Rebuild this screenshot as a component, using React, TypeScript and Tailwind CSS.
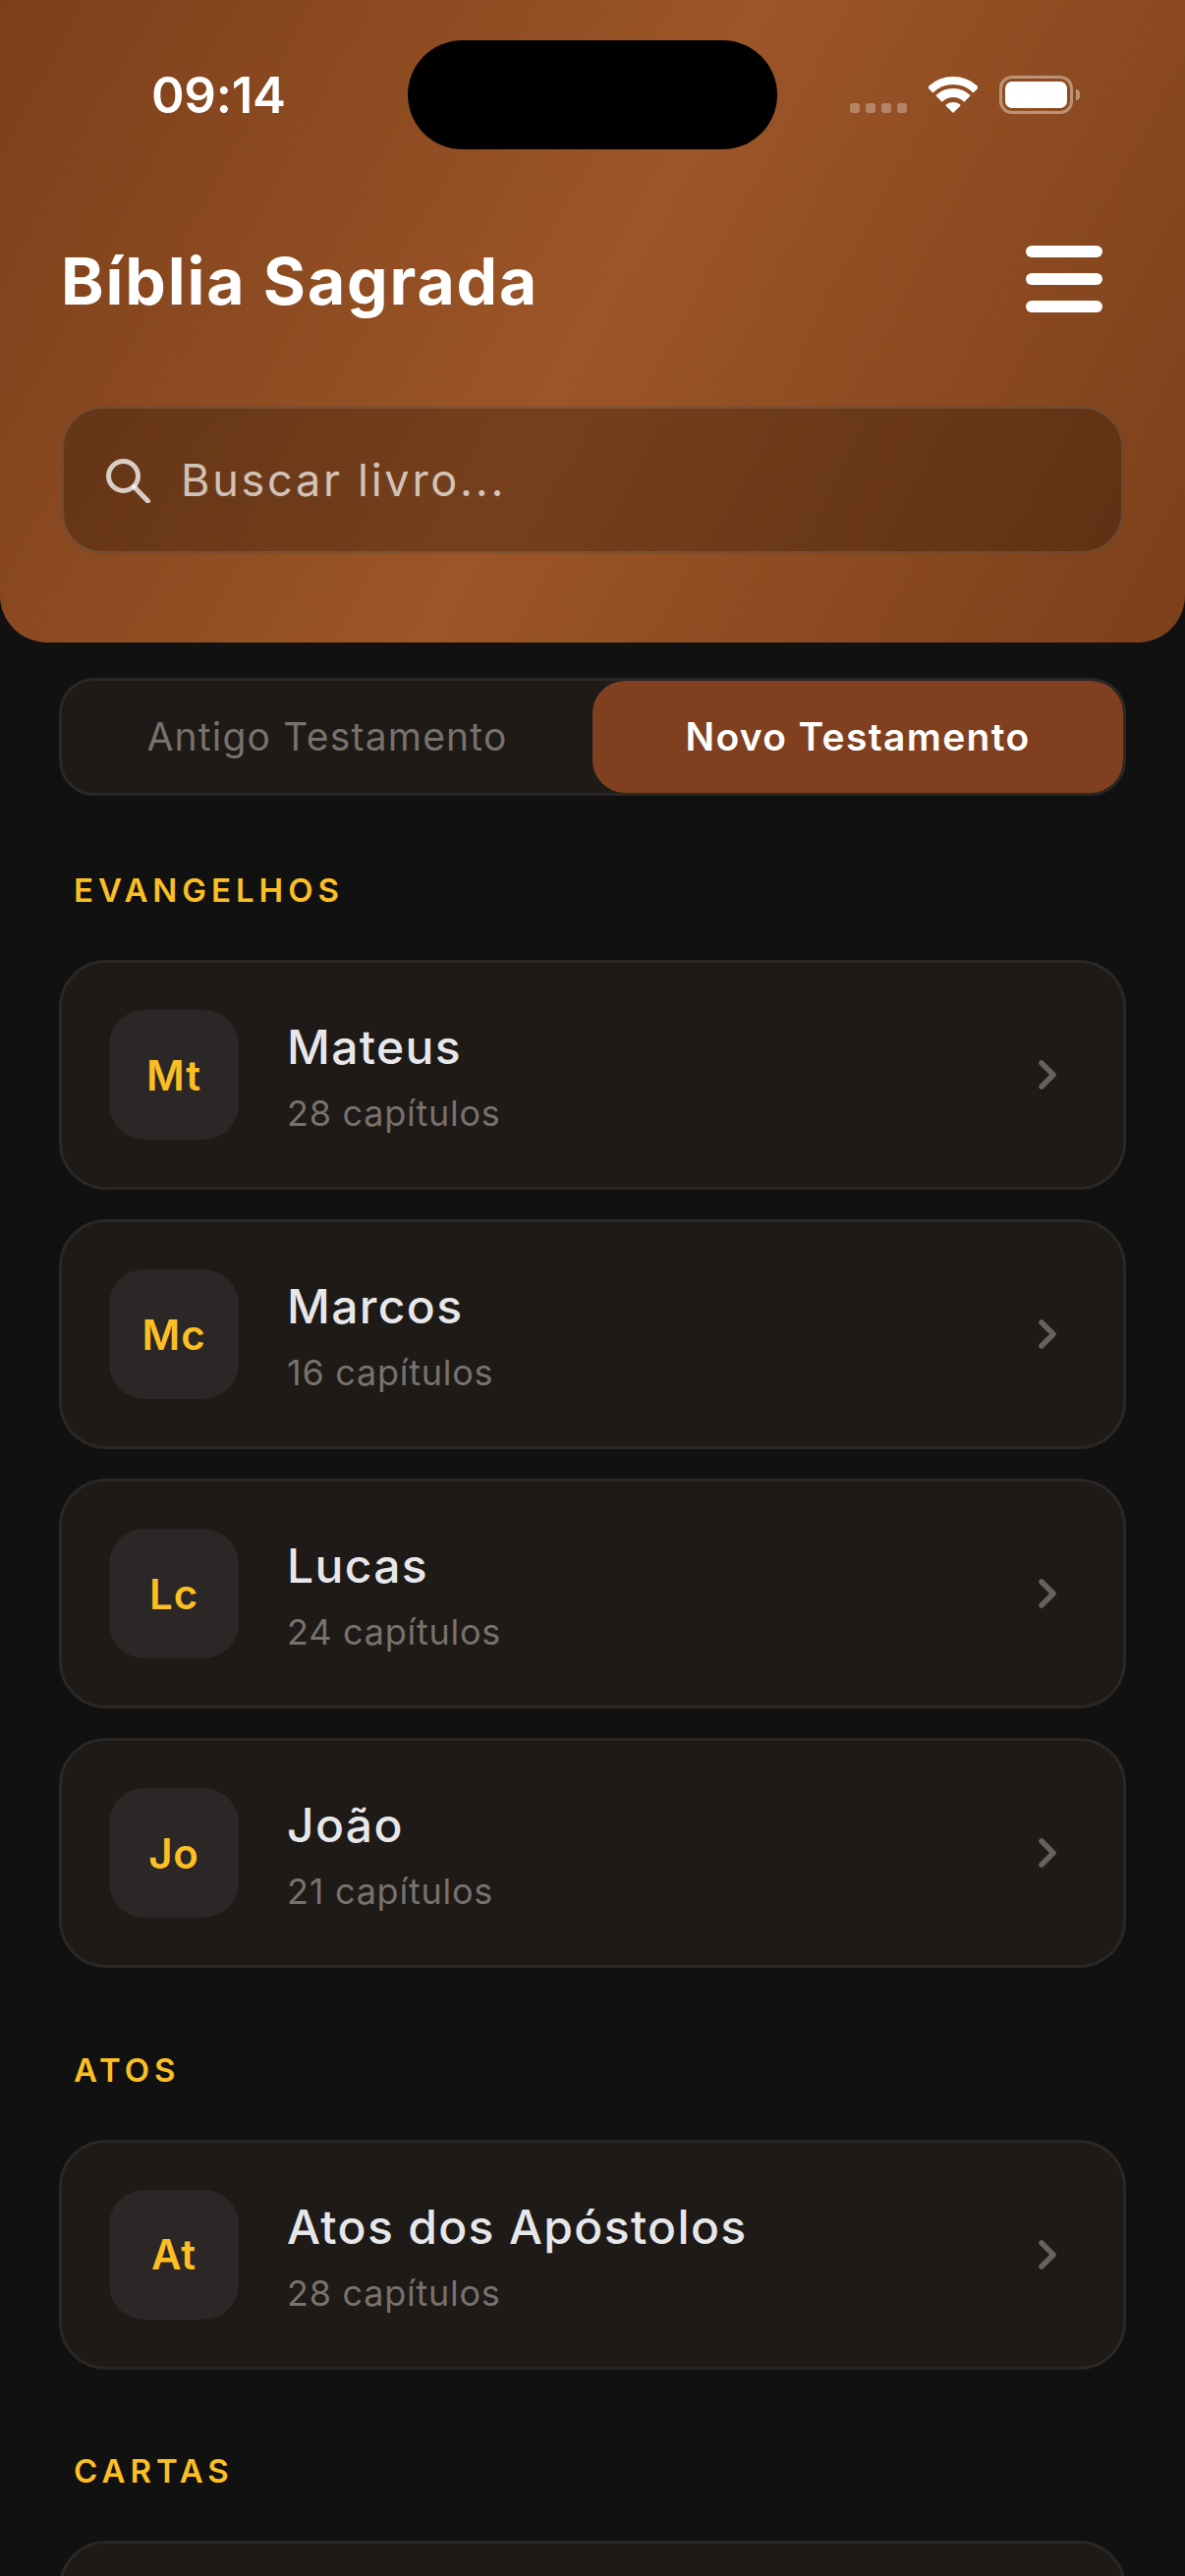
import { ChevronRight } from "lucide-react";

const sections = [
  {
    title: "EVANGELHOS",
    books: [
      { abbr: "Mt", name: "Mateus", chapters: 28 },
      { abbr: "Mc", name: "Marcos", chapters: 16 },
      { abbr: "Lc", name: "Lucas", chapters: 24 },
      { abbr: "Jo", name: "João", chapters: 21 },
    ],
  },
  {
    title: "ATOS",
    books: [{ abbr: "At", name: "Atos dos Apóstolos", chapters: 28 }],
  },
  {
    title: "CARTAS",
    books: [],
  },
];

function StatusBar() {
  return (
    <div className="flex h-[111px] items-center justify-between">
      <span className="ml-[154px] w-[261px] text-[51px] leading-none font-semibold tracking-[-0.3px] text-white">
        09:14
      </span>

      <div className="h-[111px] w-[376px] rounded-full bg-black" />

      <div className="flex flex-1 items-start pl-[74px]">
        {/* Signal */}
        <div className="mt-[27px] flex gap-[6px]">
          <span className="h-[10px] w-[10px] rounded-[3px] bg-white/30" />
          <span className="h-[10px] w-[10px] rounded-[3px] bg-white/30" />
          <span className="h-[10px] w-[10px] rounded-[3px] bg-white/30" />
          <span className="h-[10px] w-[10px] rounded-[3px] bg-white/30" />
        </div>

        {/* Wifi */}
        <svg className="ml-[22px]" width="50" height="37" viewBox="0 0 50 37" fill="none">
          <path d="M1.67 13.67A33 33 0 0 1 48.33 13.67" stroke="white" strokeWidth="8" />
          <path d="M10.5 22.5A20.5 20.5 0 0 1 39.5 22.5" stroke="white" strokeWidth="9" />
          <path d="M25 37L17.2 29.2A11 11 0 0 1 32.8 29.2Z" fill="white" />
        </svg>

        {/* Battery */}
        <div className="-mt-px ml-[22px] flex items-center">
          <div className="h-[39px] w-[75px] rounded-[13px] border-[3px] border-white/40 p-[3px]">
            <div className="h-full w-full rounded-[7px] bg-white" />
          </div>
          <div className="ml-[3px] h-[11px] w-[4px] rounded-r-full bg-white/40" />
        </div>
      </div>
    </div>
  );
}

function BookCard({ abbr, name, chapters }: { abbr: string; name: string; chapters: number }) {
  return (
    <div className="flex h-[234px] items-center rounded-[48px] border-[3px] border-[#2a2725] bg-[#1d1a17] pr-[53px] pl-[48px]">
      <div className="flex h-[132px] w-[132px] shrink-0 items-center justify-center rounded-[36px] bg-[#2a2726] text-[42px] font-semibold tracking-[0.84px] text-[#fbbf24]">
        {abbr}
      </div>

      <div className="ml-[49px] flex flex-1 flex-col pt-[4px]">
        <span className="text-[48px] leading-[60px] font-medium tracking-[1.35px] text-[#e7e7ea]">
          {name}
        </span>
        <span className="mt-[14px] text-[36px] leading-[46px] tracking-[0.75px] text-[#78716c]">
          {chapters} capítulos
        </span>
      </div>

      <ChevronRight size={48} strokeWidth={2.75} className="text-[#66625f]" />
    </div>
  );
}

export default function App() {
  return (
    <div className="h-[2622px] w-[1206px] overflow-hidden bg-[#111111] font-[Inter,sans-serif]">
      {/* Header */}

      <header className="rounded-b-[48px] bg-[linear-gradient(118deg,#7b3f1a,#9c5527_50%,#7b3f1a)] px-[62px] pt-[41px] pb-[90px]">
        <div className="-mx-[62px]">
          <StatusBar />
        </div>

        <div className="mt-[98px] flex h-[68px] items-center justify-between">
          <h1 className="mt-[4px] text-[66px] leading-none font-bold tracking-[1.85px] text-white">
            Bíblia Sagrada
          </h1>

          <div className="mr-[22px] flex flex-col gap-[16px]">
            <span className="h-[12px] w-[78px] rounded-full bg-white" />
            <span className="h-[12px] w-[78px] rounded-full bg-white" />
            <span className="h-[12px] w-[78px] rounded-full bg-white" />
          </div>
        </div>

        <div className="mt-[95px] flex h-[151px] items-center rounded-[42px] border-[3px] border-white/10 bg-black/25 pl-[42px]">
          {/* Search icon */}
          <svg width="46" height="46" viewBox="0 0 46 46" fill="none" className="text-white/75">
            <circle cx="18.5" cy="18.5" r="15" stroke="currentColor" strokeWidth="5" />
            <path d="M29.5 29.5L43.5 44" stroke="currentColor" strokeWidth="5" strokeLinecap="round" />
          </svg>
          <span className="ml-[31px] text-[45px] tracking-[2.75px] text-white/70">Buscar livro...</span>
        </div>
      </header>

      <main className="px-[60px] pt-[36px]">
        {/* Tabs */}

        <div className="flex h-[120px] rounded-[36px] border-[3px] border-[#2a2725] bg-[#1d1a17]">
          <div className="flex flex-1 items-center justify-center text-[39px] tracking-[1.22px] text-[#78716c]">
            Antigo Testamento
          </div>
          <div className="flex flex-1 items-center justify-center rounded-[33px] bg-[#80401f] text-[39px] font-semibold tracking-[1.33px] text-white">
            Novo Testamento
          </div>
        </div>

        {/* Sections */}

        {sections.map((section) => (
          <section key={section.title} className="mt-[83.5px] first-of-type:mt-[76px]">
            <h2 className="mb-[51px] ml-[15px] text-[33px] leading-[40px] font-semibold tracking-[4.95px] text-[#fbbf24]">
              {section.title}
            </h2>

            <div className="flex flex-col gap-[30px]">
              {section.books.map((book) => (
                <BookCard key={book.abbr} {...book} />
              ))}

              {/* Next card, cut off by the bottom of the screen */}
              {section.books.length === 0 && (
                <div className="h-[234px] rounded-[48px] border-[3px] border-[#2a2725] bg-[#1d1a17]" />
              )}
            </div>
          </section>
        ))}
      </main>
    </div>
  );
}
